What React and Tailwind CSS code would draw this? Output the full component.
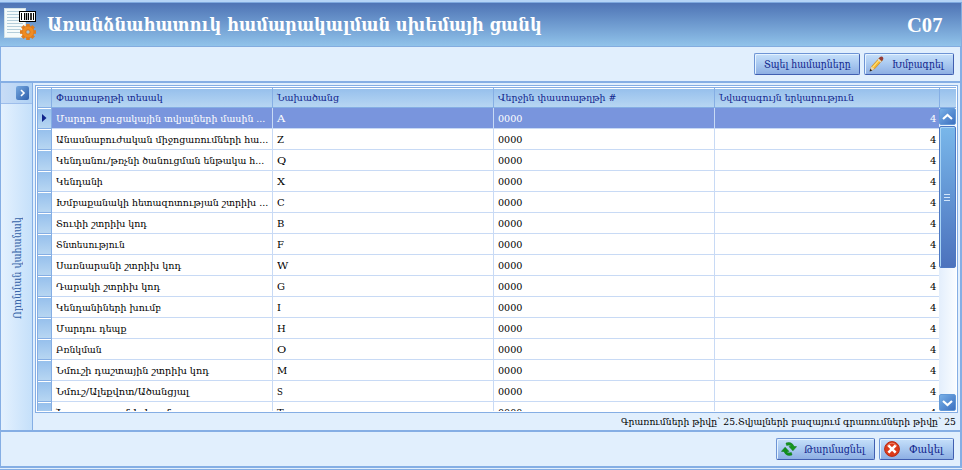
import React, { useLayoutEffect, useRef } from "react";

// Text condensed or stretched to a known column width.
function Fit({ w, children, className = "" }) {
  const ref = useRef(null);
  useLayoutEffect(() => {
    const el = ref.current;
    el.style.transform = "none";
    el.style.transform = `scaleX(${w / el.offsetWidth})`;
  }, [w]);
  return (
    <span className={`inline-block shrink-0 whitespace-nowrap text-left ${className}`} style={{ width: w }}>
      <span ref={ref} className="inline-block origin-left">{children}</span>
    </span>
  );
}

const rows = [
  ["Մարդու ցուցակային տվյալների մասին ...", 209, "A", 8],
  ["Անասնաբուժական միջոցառումների հա...", 212, "Z", 7],
  ["Կենդանու/թռչնի ծանուցման ենթակա հ...", 208, "Q", 9],
  ["Կենդանի", 47, "X", 8],
  ["Խմբաքանակի հետազոտության շտրիխ ...", 212, "C", 8],
  ["Տուփի շտրիխ կոդ", 91, "B", 7],
  ["Տնտեսություն", 69, "F", 7],
  ["Սառնարանի շտրիխ կոդ", 125, "W", 11],
  ["Դարակի շտրիխ կոդ", 104, "G", 8],
  ["Կենդանիների խումբ", 105, "I", 4],
  ["Մարդու դեպք", 70, "H", 9],
  ["Բռնկման", 46, "O", 9],
  ["Նմուշի դաշտային շտրիխ կոդ", 153, "M", 10],
  ["Նմուշ/Ալեքվոտ/Ածանցյալ", 133, "S", 6],
  ["Նստաշրջանի համար", 133, "T", 7],
];

const headers = [
  ["Փաստաթղթի տեսակ", 107],
  ["Նախածանց", 62],
  ["Վերջին փաստաթղթի #", 118],
  ["Նվազագույն երկարություն", 135],
];

const cols = "grid grid-cols-[14px_221px_221px_221px_224px]";

function Button({ width, label, textWidth, icon, gap = "", pad = "justify-center" }) {
  return (
    <button className={`${width} ${pad} flex h-[22px] items-center rounded-[2px] border border-[#6d94d5] border-r-[#405fb1] border-b-[#405fb1] bg-linear-to-b from-[#c6e0fa] via-[#a9c9f0] to-[#8eafe3] text-[10.5px] leading-[20px] text-[#10248c] shadow-[inset_1px_1px_0_#e5f3ff]`}>
      {icon}
      <Fit w={textWidth} className={gap}>{label}</Fit>
    </button>
  );
}

function PageIcon() {
  return (
    <svg width="33" height="34" viewBox="0 0 33 34" className="shrink-0">
      <rect x="0.5" y="0.5" width="21" height="29" fill="#f5fbfb" stroke="#d3e2e8" />
      <path d="M3 3.5h16M3 6.5h16M3 9.5h16M3 12.5h16M3 15.5h16M3 18.5h15M3 21.5h14M3 24.5h14" stroke="#b4cedb" />
      <rect x="15.5" y="3.5" width="16" height="10" fill="#fff" stroke="#000" />
      <path d="M17.5 5v7M20.5 5v7M24.5 5v7M29.5 5v7" stroke="#000" />
      <path d="M22.5 5v7M27 5v7" stroke="#000" strokeWidth="1.6" />
      <g transform="translate(24 24)">
        <g fill="#e07d20">
          <rect x="-1.8" y="-8" width="3.6" height="16" />
          <rect x="-1.8" y="-8" width="3.6" height="16" transform="rotate(45)" />
          <rect x="-1.8" y="-8" width="3.6" height="16" transform="rotate(90)" />
          <rect x="-1.8" y="-8" width="3.6" height="16" transform="rotate(135)" />
        </g>
        <circle r="6" fill="#f08c22" stroke="#d87518" strokeWidth="0.7" />
        <circle r="2.2" fill="#a9c4d5" stroke="#d87518" />
      </g>
    </svg>
  );
}

function Pencil() {
  return (
    <svg width="15" height="16" viewBox="0 0 15 16" className="shrink-0">
      <path d="M1 15L2.5 10.5L10.5 1.8L13.5 4.3L5.4 13Z" fill="#f5b52e" stroke="#b87f2b" strokeWidth="0.6" />
      <path d="M3.7 11.4L11 3.2" stroke="#ffe378" strokeWidth="1.2" />
      <path d="M9.7 2.7L11 1.1Q13-.1 14.2 1.7Q14.7 3 13.5 4.2L12.6 5Z" fill="#943b35" />
      <path d="M9 3.3L12 6" stroke="#d9d9d9" strokeWidth="1.2" />
      <path d="M1 15L2.5 10.5L5.4 13Z" fill="#ead7b5" />
      <path d="M.6 15.4L1.4 12.8L3.1 14.4Z" fill="#222" />
    </svg>
  );
}

function Refresh() {
  return (
    <svg width="16" height="14" viewBox="0 0 16 14" className="shrink-0">
      <path d="M5 1Q11-.8 13 4.6L15.6 4.6L11.9 8.8L8 4.6L10.2 4.6Q9 2.4 5.6 3.4Z" fill="#16971d" stroke="#087313" strokeWidth=".5" />
      <path d="M11 13Q5 14.8 3 9.4L.4 9.4L4.1 5.2L8 9.4L5.8 9.4Q7 11.6 10.4 10.6Z" fill="#119019" stroke="#087313" strokeWidth=".5" />
    </svg>
  );
}

function Close() {
  return (
    <svg width="16" height="16" viewBox="0 0 16 16" className="shrink-0">
      <circle cx="8" cy="8" r="7.4" fill="#dc3b1a" stroke="#b72a13" />
      <path d="M3 5Q8-.8 13 5" fill="none" stroke="#ef8469" />
      <path d="M5.3 5.3L10.7 10.7M10.7 5.3L5.3 10.7" stroke="#fff" strokeWidth="2.6" strokeLinecap="square" />
    </svg>
  );
}

function ScrollButton({ d }) {
  return (
    <div className="flex h-[17px] w-[17px] shrink-0 items-center justify-center rounded-[2px] border border-[#6299d8] bg-linear-to-br from-[#78afe7] to-[#3d70bf]">
      <svg width="11" height="8" viewBox="0 0 11 8"><path d={d} fill="none" stroke="#fff" strokeWidth="2.2" /></svg>
    </div>
  );
}

export default function App() {
  return (
    <div className="flex h-[470px] w-[962px] flex-col overflow-hidden bg-[#e1effd] font-['DejaVu_Serif',serif] text-[10px] text-black">
      <div className="h-[3px] shrink-0 border-b border-[#7fa9df] bg-[#b4d3f6]" />
      <header className="flex h-[44px] shrink-0 items-center border-r border-b border-[#83acdf] bg-linear-to-b from-[#4f74b5] to-[#91c3ea] text-[18px] font-bold text-white">
        <div className="mt-px ml-1 flex"><PageIcon /></div>
        <Fit w={495} className="ml-[10px] leading-[24px]">Առանձնահատուկ համարակալման սխեմայի ցանկ</Fit>
        <Fit w={35} className="mr-[19px] ml-auto font-['Liberation_Serif',serif] text-[20px] leading-[24px]">C07</Fit>
      </header>

      <div className="flex h-[36px] shrink-0 items-start justify-end gap-1 border-r-2 border-b-2 border-l border-[#85aee4] pt-[6px] pr-[6px]">
        <Button width="w-[106px]" label="Տպել համարները" textWidth={87} />
        <Button width="w-[90px]" label="Խմբագրել" textWidth={52} icon={<Pencil />} gap="ml-[8px]" pad="pl-[4px]" />
      </div>

      <main className="flex h-[349px] shrink-0 border-r-2 border-b-2 border-[#85aee4]">
        <aside className="flex w-[33px] shrink-0 flex-col border-r border-l border-[#85aee4] bg-linear-to-r from-[#e4f1fe] to-[#c5e0fa]">
          <div className="flex h-[21px] items-center justify-end border-b border-[#9dbdeb] bg-linear-to-r from-[#c8dcf6] to-[#b0d2f5] pr-[3px]">
            <div className="flex h-[14px] w-[13px] items-center justify-center rounded-[2px] bg-linear-to-br from-[#76a8df] to-[#2e5fac]">
              <svg width="6" height="8" viewBox="0 0 6 8"><path d="M1 1L4 4L1 7" stroke="#fff" strokeWidth="1.6" fill="none" /></svg>
            </div>
          </div>
          <div className="flex flex-1 items-end justify-center pb-[111px] text-[10.5px] text-[#3462a7]">
            <span className="flex h-[102px] w-[14px] items-end">
              <span className="h-[14px] w-[102px] shrink-0 origin-bottom-left translate-x-[14px] -rotate-90 leading-[14px]"><Fit w={102}>Որոնման վահանակ</Fit></span>
            </span>
          </div>
        </aside>

        <section className="flex min-w-0 flex-1 flex-col pt-[2px] pr-[2px] pl-[2px]">
          <div className="h-[328px] w-[923px] shrink-0 border border-[#85aee4] bg-white p-px">
            <div className="h-full overflow-hidden border-t border-l border-[#85aee4]">
              <div className="flex h-[20px] border-b border-[#85aee4] bg-linear-to-b from-[#95bfec] to-[#b7d6f2] text-[#10248c]">
                <div className={`${cols} shadow-[inset_0_1px_0_white]`}>
                  <div className="border-r border-[#85aee4]" />
                  {headers.map(([label, w], i) => (
                    <div key={label} className={`h-[19px] pl-[4px] leading-[20px] ${i < 3 ? "border-r border-[#85aee4]" : ""}`}><Fit w={w}>{label}</Fit></div>
                  ))}
                </div>
                <div className="flex-1 border-l border-[#85aee4] shadow-[inset_0_1px_0_white]" />
              </div>
              <div className="flex h-[303px]">
                <div className="h-full w-[901px] shrink-0 overflow-hidden">
                  {rows.map(([name, w, prefix, pw], i) => (
                    <div key={name} className={`${cols} h-[21px] leading-[22px] ${i === 0 ? "text-white" : ""}`}>
                      <div className="flex items-center justify-center border-r border-b border-[#85aee4] bg-linear-to-b from-[#95bfec] to-[#b7d6f2] shadow-[inset_0_1px_0_white]">
                        {i === 0 && <svg width="5" height="8" viewBox="0 0 5 8"><path d="M0 0L4.5 4L0 8Z" fill="#10248c" /></svg>}
                      </div>
                      <div className={`h-[21px] border-r border-b border-[#c8daf5] pl-[4px] ${i === 0 ? "bg-[#7995dd]" : ""}`}><Fit w={w}>{name}</Fit></div>
                      <div className={`h-[21px] border-r border-b border-[#c8daf5] pl-[4px] ${i === 0 ? "bg-[#7995dd]" : ""}`}><Fit w={pw}>{prefix}</Fit></div>
                      <div className={`h-[21px] border-r border-b border-[#c8daf5] pl-[4px] ${i === 0 ? "bg-[#7995dd]" : ""}`}><Fit w={24}>0000</Fit></div>
                      <div className={`h-[21px] border-b border-[#c8daf5] pr-[3px] text-right ${i === 0 ? "bg-[#7995dd]" : ""}`}><Fit w={6}>4</Fit></div>
                    </div>
                  ))}
                </div>
                <div className="flex h-full w-[17px] shrink-0 flex-col bg-linear-to-r from-[#e3eefc] to-[#f9fcff]">
                  <ScrollButton d="M1 6L5.5 2L10 6" />
                  <div className="mt-px flex h-[142px] items-center justify-center rounded-[2px] border border-[#4d78c3] bg-linear-to-b from-[#79b7ea] to-[#4c72bd] shadow-[inset_1px_1px_0_#a9d5f6]">
                    <svg width="7" height="7" viewBox="0 0 7 7"><path d="M0 .5h6M0 3.5h6M0 6.5h6" stroke="#d2e6fa" /></svg>
                  </div>
                  <div className="flex-1" />
                  <ScrollButton d="M1 2L5.5 6L10 2" />
                </div>
              </div>
            </div>
          </div>
          <div className="flex h-[17px] justify-end pr-[2px] leading-[17px]"><Fit w={335}>Գրառումների թիվը՝ 25.Տվյալների բազայում գրառումների թիվը՝ 25</Fit></div>
        </section>
      </main>

      <footer className="flex h-[36px] shrink-0 items-start justify-end gap-1 border-r-2 border-b-2 border-l border-[#85aee4] pt-[6px] pr-[6px]">
        <Button width="w-[99px]" label="Թարմացնել" textWidth={61} icon={<Refresh />} gap="ml-[7px]" pad="pl-[4px]" />
        <Button width="w-[75px]" label="Փակել" textWidth={34} icon={<Close />} gap="ml-[9px]" pad="pl-[4px]" />
      </footer>
      <div className="h-[2px] border-b border-[#85aee4]" />
    </div>
  );
}
